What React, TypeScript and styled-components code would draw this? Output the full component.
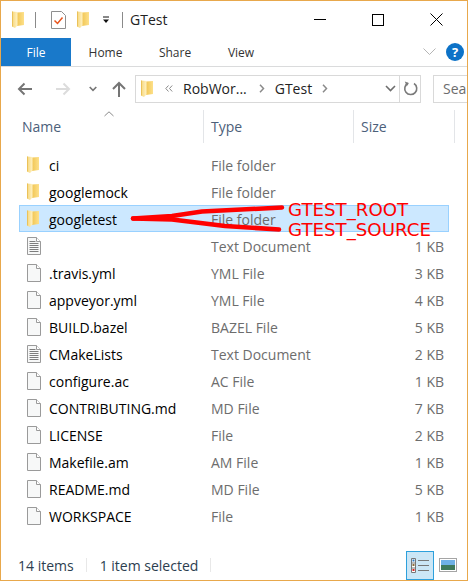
import React from "react";
import styled, { createGlobalStyle } from "styled-components";

const Global = createGlobalStyle`
  html, body { margin: 0; padding: 0; background: #fff; }
  #root { width: 468px; height: 581px; }
`;

const Win = styled.div`
  position: relative;
  box-sizing: border-box;
  width: 468px;
  height: 581px;
  border: 1px solid #e8a84c;
  background: #fff;
  overflow: hidden;
  display: flex;
  flex-direction: column;
  font-family: "Open Sans", "Noto Sans", sans-serif;
  font-size: 14px;
  color: #000;
`;

const TitleBar = styled.div`
  height: 37px;
  display: flex;
  align-items: center;
  flex: none;
`;
const QuickIcons = styled.div`
  display: flex;
  align-items: center;
  padding-left: 11px;
`;
const Sep = styled.span<{ $ml: number; $mr: number }>`
  width: 1px;
  height: 16px;
  background: #8a8a8a;
  margin-left: ${(p) => p.$ml}px;
  margin-right: ${(p) => p.$mr}px;
`;
const Spacer = styled.span<{ $w: number }>`
  width: ${(p) => p.$w}px;
  flex: none;
`;
const Title = styled.span`
  font-size: 14px;
  color: #222;
  margin-left: 7px;
  margin-bottom: 1px;
  flex: 1;
`;
const WinBtn = styled.span`
  width: 58px;
  height: 37px;
  display: flex;
  align-items: center;
  justify-content: center;
`;
const WinBtns = styled.div`
  display: flex;
  margin-right: 2px;
`;

const Ribbon = styled.div`
  height: 28px;
  display: flex;
  align-items: stretch;
  border-bottom: 1px solid #dadbdc;
  flex: none;
  padding-right: 3px;
`;
const Tab = styled.span<{ $active?: boolean; $w: number }>`
  width: ${(p) => p.$w}px;
  display: flex;
  align-items: center;
  justify-content: center;
  font-size: 12px;
  background: ${(p) => (p.$active ? "#1979ca" : "transparent")};
  color: ${(p) => (p.$active ? "#fff" : "#333")};
`;
const RibbonEnd = styled.div`
  margin-left: auto;
  display: flex;
  align-items: center;
  gap: 10px;
`;
const Help = styled.span`
  width: 18px;
  height: 18px;
  border-radius: 50%;
  background: #0d72c7;
  color: #fff;
  font-weight: 700;
  font-size: 13px;
  display: flex;
  align-items: center;
  justify-content: center;
`;

const Nav = styled.div`
  height: 43px;
  display: flex;
  align-items: center;
  flex: none;
  padding-left: 16px;
`;
const NavBtns = styled.div`
  width: 118px;
  display: flex;
  align-items: center;
  flex: none;
`;
const AddressBox = styled.div`
  box-sizing: border-box;
  flex: none;
  width: 286px;
  height: 28px;
  border: 1px solid #d9d9d9;
  display: flex;
  align-items: center;
  font-size: 14px;
  color: #222;
`;
const Crumb = styled.span<{ $ml: number }>`
  margin-left: ${(p) => p.$ml}px;
  display: flex;
  align-items: center;
  white-space: nowrap;
`;
const Refresh = styled.span`
  box-sizing: border-box;
  width: 21px;
  height: 26px;
  margin-left: auto;
  border-left: 1px solid #d9d9d9;
  display: flex;
  align-items: center;
  justify-content: center;
`;
const Search = styled.div`
  box-sizing: border-box;
  flex: none;
  margin-left: 12px;
  width: 40px;
  height: 28px;
  border: 1px solid #d9d9d9;
  border-right: none;
  color: #6d6d6d;
  font-size: 14px;
  padding-left: 9px;
  display: flex;
  align-items: center;
  overflow: hidden;
`;

const Header = styled.div`
  position: relative;
  height: 34px;
  display: grid;
  grid-template-columns: 203px 150px 101px;
  flex: none;
`;
const HeadCell = styled.div<{ $pl: number }>`
  padding-left: ${(p) => p.$pl}px;
  border-right: 1px solid #e3e5e8;
  margin-bottom: 1px;
  display: flex;
  align-items: center;
  color: #4c607a;
  font-size: 14px;
`;
const SortMark = styled.svg`
  position: absolute;
  left: 103px;
  top: 1px;
`;

const List = styled.div`
  padding-top: 7px;
  flex: 1;
`;
const Row = styled.div<{ $sel?: boolean }>`
  box-sizing: border-box;
  width: 430px;
  height: 27px;
  margin-left: 18px;
  display: grid;
  grid-template-columns: 192px 150px 88px;
  align-items: center;
  background: ${(p) => (p.$sel ? "#cce8ff" : "transparent")};
  outline: ${(p) => (p.$sel ? "1px solid #99d1ff" : "none")};
  outline-offset: -1px;
  font-size: 14px;
`;
const NameCell = styled.span`
  display: flex;
  align-items: center;
  padding-left: 8px;
  gap: 8px;
  white-space: nowrap;
`;
const IconSlot = styled.span<{ $lift?: boolean }>`
  width: 14px;
  height: 18px;
  flex: none;
  display: flex;
  align-items: center;
  margin-bottom: ${(p) => (p.$lift ? 1 : 0)}px;
`;
const NameText = styled.span`
  padding-top: 2px;
`;
const TypeCell = styled.span`
  color: #6d6d6d;
  padding-top: 2px;
  white-space: nowrap;
`;
const SizeCell = styled.span`
  color: #6d6d6d;
  text-align: right;
  padding-right: 5px;
  padding-top: 2px;
  white-space: nowrap;
`;

const Status = styled.div`
  height: 30px;
  flex: none;
  display: flex;
  align-items: center;
  font-size: 14px;
  color: #2c3e50;
  padding-left: 17px;
`;
const StatusSep = styled.span`
  width: 1px;
  height: 14px;
  background: #e8e8e8;
  margin: 0 13px 0 12px;
`;
const ViewBtns = styled.div`
  margin-left: auto;
  margin-right: 10px;
  display: flex;
  align-items: center;
  gap: 5px;
`;
const DetailsBtn = styled.span`
  box-sizing: border-box;
  width: 28px;
  height: 29px;
  border: 1px solid #2da0dc;
  background: #cbe6f6;
  display: flex;
  align-items: center;
  justify-content: center;
`;

const Drawing = styled.svg`
  position: absolute;
  left: -1px;
  top: -1px;
  pointer-events: none;
`;
const Note = styled.span<{ $top: number }>`
  position: absolute;
  left: 287px;
  top: ${(p) => p.$top}px;
  font-family: "DejaVu Sans", sans-serif;
  font-size: 18.2px;
  line-height: 20px;
  color: #f00;
  white-space: nowrap;
`;

const Folder = () => (
  <svg width="12" height="17" viewBox="0 0 12 17">
    <defs>
      <linearGradient id="fg" x1="0" x2="1" y1="0" y2="0">
        <stop offset="0" stopColor="#f1c654" />
        <stop offset="1" stopColor="#fde08a" />
      </linearGradient>
      <linearGradient id="ff" x1="0" x2="1" y1="0" y2="0">
        <stop offset="0" stopColor="#f6d67a" />
        <stop offset="1" stopColor="#fff2c4" />
      </linearGradient>
    </defs>
    <path d="M5 1.500 L12 1 L12 14 L5 15 Z" fill="url(#fg)" />
    <path d="M0 .5 L5.500 1 L5.500 14.500 L3 17 L0 15.500 Z" fill="url(#ff)" />
    <path d="M0 .5 L.8 .5 L.8 15.500 L0 15.500 Z" fill="#e8bd50" />
  </svg>
);

const FileIcon = () => (
  <svg width="14" height="18" viewBox="0 0 14 18">
    <path d="M.5.5h9l4 4v13H.5z" fill="#f7f8f8" stroke="#9a9a9a" />
    <path d="M9.500.5v4h4" fill="#fff" stroke="#9a9a9a" />
  </svg>
);

const TextIcon = () => (
  <svg width="14" height="18" viewBox="0 0 14 18">
    <path d="M.5.5h9l4 4v13H.5z" fill="#f7f8f8" stroke="#9a9a9a" />
    <path d="M9.500.5v4h4" fill="#fff" stroke="#9a9a9a" />
    <path d="M2.500 4.500h6M2.500 6.500h9M2.500 8.500h9M2.500 10.500h9M2.500 12.500h9M2.500 14.500h9" stroke="#7d7d7d" />
  </svg>
);

type Item = { name: string; type: string; size?: string; icon: "folder" | "file" | "text" };
const items: Item[] = [
  { name: "ci", type: "File folder", icon: "folder" },
  { name: "googlemock", type: "File folder", icon: "folder" },
  { name: "googletest", type: "File folder", icon: "folder" },
  { name: "", type: "Text Document", size: "1 KB", icon: "text" },
  { name: ".travis.yml", type: "YML File", size: "3 KB", icon: "file" },
  { name: "appveyor.yml", type: "YML File", size: "4 KB", icon: "file" },
  { name: "BUILD.bazel", type: "BAZEL File", size: "5 KB", icon: "file" },
  { name: "CMakeLists", type: "Text Document", size: "2 KB", icon: "text" },
  { name: "configure.ac", type: "AC File", size: "1 KB", icon: "file" },
  { name: "CONTRIBUTING.md", type: "MD File", size: "7 KB", icon: "file" },
  { name: "LICENSE", type: "File", size: "2 KB", icon: "file" },
  { name: "Makefile.am", type: "AM File", size: "1 KB", icon: "file" },
  { name: "README.md", type: "MD File", size: "5 KB", icon: "file" },
  { name: "WORKSPACE", type: "File", size: "1 KB", icon: "file" },
];

export default function App() {
  return (
    <Win>
      <Global />
      <TitleBar>
        <QuickIcons>
          <Folder />
          <Sep $ml={11} $mr={15} />
          <svg width="15" height="18" viewBox="0 0 15 18">
            <path d="M.5.5h10l4 4v13H.5z" fill="#fff" stroke="#8f8f8f" />
            <path d="M3.500 9.500l3 3 5-6" fill="none" stroke="#e8541c" strokeWidth="1.500" />
          </svg>
          <Spacer $w={11} />
          <Folder />
          <Spacer $w={13} />
          <svg width="8" height="8" viewBox="0 0 8 8">
            <path d="M1 1h6" stroke="#111" />
            <path d="M1 3.500h6L4 7z" fill="#111" />
          </svg>
          <Sep $ml={12} $mr={0} />
        </QuickIcons>
        <Title>GTest</Title>
        <WinBtns>
          <WinBtn>
            <svg width="12" height="12" viewBox="0 0 12 12">
              <path d="M0 5.500h12" stroke="#000" />
            </svg>
          </WinBtn>
          <WinBtn>
            <svg width="12" height="12" viewBox="0 0 12 12">
              <rect x=".5" y=".5" width="11" height="11" fill="none" stroke="#000" />
            </svg>
          </WinBtn>
          <WinBtn>
            <svg width="13" height="13" viewBox="0 0 13 13">
              <path d="M.5.5l12 12M12.500.5l-12 12" stroke="#000" />
            </svg>
          </WinBtn>
        </WinBtns>
      </TitleBar>

      <Ribbon>
        <Tab $active $w={70}>File</Tab>
        <Tab $w={69}>Home</Tab>
        <Tab $w={70}>Share</Tab>
        <Tab $w={62}>View</Tab>
        <RibbonEnd>
          <svg width="13" height="8" viewBox="0 0 13 8">
            <path d="M.5.5l6 6 6-6" fill="none" stroke="#b5b5b5" />
          </svg>
          <Help>?</Help>
        </RibbonEnd>
      </Ribbon>

      <Nav>
        <NavBtns>
          <svg width="15" height="14" viewBox="0 0 15 14">
            <path d="M15 7H2M7.500 1.500L2 7l5.500 5.500" fill="none" stroke="#757575" strokeWidth="2" />
          </svg>
          <Spacer $w={24} />
          <svg width="15" height="14" viewBox="0 0 15 14">
            <path d="M0 7h13M7.500 1.500L13 7l-5.500 5.500" fill="none" stroke="#dcdcdc" strokeWidth="2" />
          </svg>
          <Spacer $w={18} />
          <svg width="8" height="6" viewBox="0 0 8 6">
            <path d="M.7 1l3.300 3.300L7.300 1" fill="none" stroke="#757575" strokeWidth="1.600" />
          </svg>
          <Spacer $w={15} />
          <svg width="14" height="16" viewBox="0 0 14 16">
            <path d="M7 16V2M1 8l6-6 6 6" fill="none" stroke="#757575" strokeWidth="2" />
          </svg>
        </NavBtns>
        <AddressBox>
          <Crumb $ml={5}><Folder /></Crumb>
          <Crumb $ml={12}>
            <svg width="8" height="7" viewBox="0 0 8 7">
              <path d="M3.500.5L.8 3.500l2.700 3M7.200.5L4.500 3.500l2.700 3" fill="none" stroke="#8a8a8a" />
            </svg>
          </Crumb>
          <Crumb $ml={10}>RobWor...</Crumb>
          <Crumb $ml={12}>
            <svg width="6" height="9" viewBox="0 0 6 9">
              <path d="M1 .8l3.500 3.700L1 8.200" fill="none" stroke="#8a8a8a" strokeWidth="1.500" />
            </svg>
          </Crumb>
          <Crumb $ml={10}>GTest</Crumb>
          <Crumb $ml={10}>
            <svg width="6" height="9" viewBox="0 0 6 9">
              <path d="M1 .8l3.500 3.700L1 8.200" fill="none" stroke="#8a8a8a" strokeWidth="1.500" />
            </svg>
          </Crumb>
          <Crumb $ml={57}>
            <svg width="11" height="7" viewBox="0 0 11 7">
              <path d="M1 1l4.500 4.500L10 1" fill="none" stroke="#6e6e6e" strokeWidth="1.600" />
            </svg>
          </Crumb>
          <Refresh>
            <svg width="15" height="15" viewBox="0 0 15 15">
              <path d="M5 2.200A6 6 0 1 0 11 2.500" fill="none" stroke="#7a7a7a" strokeWidth="1.600" />
              <path d="M1.800 0.500L5.800 2 3.800 5.500z" fill="#7a7a7a" />
            </svg>
          </Refresh>
        </AddressBox>
        <Search>Sea</Search>
      </Nav>

      <Header>
        <SortMark width="10" height="6" viewBox="0 0 10 6">
          <path d="M.5 5L5 .8 9.500 5" fill="none" stroke="#8a8a8a" />
        </SortMark>
        <HeadCell $pl={21}>Name</HeadCell>
        <HeadCell $pl={7}>Type</HeadCell>
        <HeadCell $pl={7}>Size</HeadCell>
      </Header>

      <List>
        {items.map((it, i) => (
          <Row key={i} $sel={it.name === "googletest"}>
            <NameCell>
              <IconSlot $lift={it.icon === "folder"}>
                {it.icon === "folder" ? <Folder /> : it.icon === "text" ? <TextIcon /> : <FileIcon />}
              </IconSlot>
              <NameText>{it.name}</NameText>
            </NameCell>
            <TypeCell>{it.type}</TypeCell>
            <SizeCell>{it.size}</SizeCell>
          </Row>
        ))}
      </List>

      <Status>
        14 items
        <StatusSep />
        1 item selected
        <StatusSep />
        <ViewBtns>
          <DetailsBtn>
            <svg width="18" height="15" viewBox="0 0 18 15">
              <path d="M.5.5h4v14h-4zM.5 5h4M.5 10h4" fill="#fff" stroke="#777" />
              <rect x="1.500" y="1.500" width="2" height="2" fill="#2a78c5" />
              <rect x="1.500" y="6" width="2" height="2" fill="#8a6d3b" />
              <rect x="1.500" y="11" width="2" height="2" fill="#d22" />
              <path d="M7 2.500h11M7 7.500h11M7 12.500h11" stroke="#777" />
            </svg>
          </DetailsBtn>
          <svg width="18" height="14" viewBox="0 0 18 14">
            <rect x=".5" y=".5" width="17" height="13" fill="#fff" stroke="#a5a5a5" />
            <rect x="2" y="2" width="14" height="5" fill="#6fb1e6" />
            <rect x="2" y="7" width="14" height="5" fill="#3f7a5c" />
          </svg>
        </ViewBtns>
      </Status>

      <Drawing width="468" height="581" viewBox="0 0 468 581">
        <path d="M133 218.500 L172 216 L202 211.500 L282 207.500" fill="none" stroke="#f00" strokeWidth="4.500" strokeLinecap="round" strokeLinejoin="round" />
        <path d="M133 218.500 L172 219.500 L225 226 L279 229.500" fill="none" stroke="#f00" strokeWidth="4.500" strokeLinecap="round" strokeLinejoin="round" />
      </Drawing>
      <Note $top={199}>GTEST_ROOT</Note>
      <Note $top={219}>GTEST_SOURCE</Note>
    </Win>
  );
}
